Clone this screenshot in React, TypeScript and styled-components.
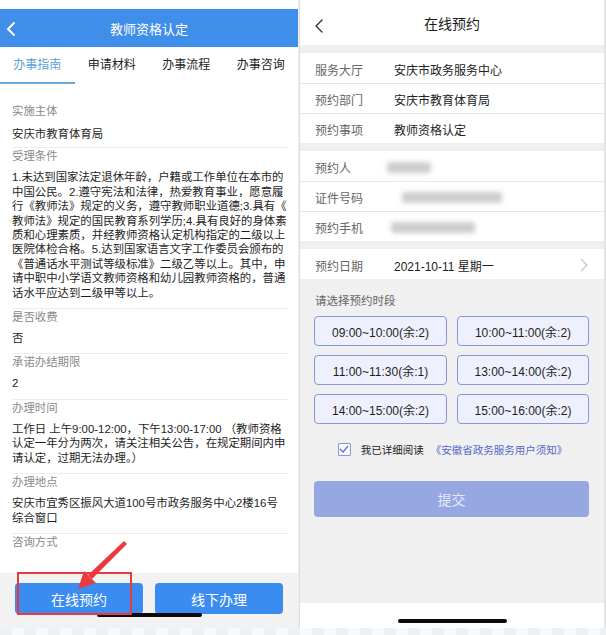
import React from "react";
import styled, { createGlobalStyle } from "styled-components";

const Global = createGlobalStyle`
  html, body { margin: 0; padding: 0; background: #ffffff; }
  body { font-family: "Liberation Sans", "Noto Sans CJK SC", sans-serif; -webkit-font-smoothing: antialiased; }
  * { box-sizing: border-box; }
`;

const Page = styled.div`
  width: 606px;
  height: 635px;
  display: flex;
  flex-direction: column;
  overflow: hidden;
`;

const Panels = styled.div`
  display: flex;
  height: 628px;
`;

const BottomStrip = styled.div`
  height: 7px;
  background: repeating-linear-gradient(90deg, #eef1f4 0 12px, #f8f9fb 12px 24px);
`;

/* ---------- left screen ---------- */
const LeftPanel = styled.div`
  position: relative;
  width: 298px;
  display: flex;
  flex-direction: column;
  background: #ffffff;
`;

const StatusGap = styled.div`
  height: 9px;
  background: #ffffff;
`;

const BlueHeader = styled.div`
  height: 38px;
  background: #3f8ee9;
  display: flex;
  align-items: center;
  justify-content: center;
  position: relative;
  color: #ffffff;
  font-size: 13px;
`;

const HeaderBack = styled.span`
  position: absolute;
  left: 6px;
  top: 13px;
  display: flex;
`;

const Tabs = styled.div`
  height: 37px;
  display: grid;
  grid-template-columns: repeat(4, 1fr);
`;

const Tab = styled.div<{ $active?: boolean }>`
  display: flex;
  align-items: center;
  justify-content: center;
  font-size: 12px;
  padding-bottom: 2px;
  color: ${(p) => (p.$active ? "#5b9fd6" : "#222222")};
  border-bottom: 2px solid ${(p) => (p.$active ? "#6aaad8" : "transparent")};
`;

const Guide = styled.div`
  flex: 1;
  overflow: hidden;
  padding: 19px 11px 0 12px;
`;

const Section = styled.div<{ $first?: boolean }>`
  border-top: ${(p) => (p.$first ? "none" : "1px solid #ececec")};
  padding-bottom: ${(p) => (p.$first ? 6 : 8)}px;
`;

const Label = styled.div`
  font-size: 11.4px;
  line-height: 16px;
  color: #8a8a8a;
`;

const Value = styled.div<{ $gap: number }>`
  margin-top: ${(p) => p.$gap}px;
  font-size: 11.4px;
  line-height: 14.4px;
  color: #1e1e1e;
`;

const Line = styled.span`
  display: block;
  white-space: nowrap;
`;

const ActionBar = styled.div`
  height: 55px;
  background: #f2f2f2;
  padding: 10px 15px 0 15px;
  display: flex;
  gap: 12px;
  align-items: flex-start;
`;

const ActionButton = styled.div`
  flex: 1;
  height: 31px;
  border-radius: 4px;
  background: #3a8cf1;
  color: #ffffff;
  font-size: 14px;
  display: flex;
  align-items: center;
  justify-content: center;
`;

const HomeBar = styled.div<{ $left: number; $top: number }>`
  position: absolute;
  left: ${(p) => p.$left}px;
  top: ${(p) => p.$top}px;
  width: 105px;
  height: 4px;
  border-radius: 2px;
  background: #0a0a0a;
`;

const Highlight = styled.div`
  position: absolute;
  left: 17px;
  top: 572px;
  width: 115px;
  height: 43px;
  border: 2px solid #ea3a3f;
`;

const ArrowSvg = styled.svg`
  position: absolute;
  left: 0;
  top: 0;
  pointer-events: none;
`;

const Separator = styled.div`
  width: 2px;
  background: linear-gradient(90deg, #f4f4f4, #d9d9d9);
`;

const EdgeLine = styled.div`
  width: 2px;
  background: #e4e4e4;
`;

/* ---------- right screen ---------- */
const RightPanel = styled.div`
  width: 304px;
  display: flex;
  flex-direction: column;
  background: #ffffff;
`;

const PlainHeader = styled.div`
  height: 45px;
  display: flex;
  align-items: center;
  justify-content: center;
  position: relative;
  font-size: 14px;
  color: #1a1a1a;
  padding-top: 1px;
`;

const PlainBack = styled.span`
  position: absolute;
  left: 14px;
  top: 19px;
  display: flex;
`;

const Band = styled.div`
  height: 8px;
  background: #efefef;
`;

const Group = styled.div`
  display: flex;
  flex-direction: column;
`;

const Row = styled.div`
  height: 30px;
  display: grid;
  grid-template-columns: 79px 1fr auto;
  align-items: center;
  padding: 2px 16px 0 15px;
  font-size: 12px;
  & + & {
    border-top: 1px solid #e6e6e6;
  }
`;

const RowLabel = styled.span`
  color: #666666;
`;

const RowValue = styled.span`
  color: #222222;
  display: flex;
  align-items: center;
`;

const Blur = styled.span<{ $w: number; $ml?: number }>`
  display: inline-block;
  width: ${(p) => p.$w}px;
  height: 11px;
  margin-left: ${(p) => p.$ml ?? 0}px;
  border-radius: 3px;
  background: #c4c4c4;
  filter: blur(2.5px);
  opacity: 0.85;
`;

const SlotSection = styled.div`
  flex: 1;
  background: #f0f0f0;
  padding: 14px 15px 0 14px;
  display: flex;
  flex-direction: column;
`;

const SlotTitle = styled.div`
  font-size: 11.5px;
  line-height: 16px;
  color: #666666;
  padding-left: 1px;
`;

const SlotGrid = styled.div`
  margin-top: 7px;
  display: grid;
  grid-template-columns: 133px 132px;
  column-gap: 10px;
  row-gap: 9px;
`;

const Slot = styled.div`
  height: 30px;
  border: 1px solid #8797dd;
  border-radius: 4px;
  background: #eef1fd;
  display: flex;
  align-items: center;
  justify-content: center;
  font-size: 12px;
  color: #1e1e1e;
`;

const AgreeRow = styled.div`
  margin-top: 17px;
  height: 16px;
  display: flex;
  align-items: center;
  justify-content: center;
  font-size: 10.5px;
  color: #222222;
  padding-left: 2px;
`;

const CheckBox = styled.span`
  width: 13px;
  height: 13px;
  border: 1px solid #8797dd;
  border-radius: 1px;
  display: flex;
  align-items: center;
  justify-content: center;
  margin-right: 10px;
  background: #f7f8fe;
`;

const Link = styled.span`
  color: #5468c9;
  margin-left: 7px;
`;

const Submit = styled.div`
  margin-top: 24px;
  height: 36px;
  border-radius: 4px;
  background: #97a7e2;
  color: #e4e9f9;
  font-size: 14px;
  display: flex;
  align-items: center;
  justify-content: center;
`;

const HomeArea = styled.div`
  height: 25px;
  background: #ffffff;
  display: flex;
  justify-content: center;
  padding-top: 16px;
`;

const Bar = styled.div`
  width: 109px;
  height: 4px;
  border-radius: 2px;
  background: #0a0a0a;
`;

const conditions = [
  "1.未达到国家法定退休年龄，户籍或工作单位在本市的",
  "中国公民。2.遵守宪法和法律，热爱教育事业，愿意履",
  "行《教师法》规定的义务，遵守教师职业道德;3.具有《",
  "教师法》规定的国民教育系列学历;4.具有良好的身体素",
  "质和心理素质，并经教师资格认定机构指定的二级以上",
  "医院体检合格。5.达到国家语言文字工作委员会颁布的",
  "《普通话水平测试等级标准》二级乙等以上。其中，申",
  "请中职中小学语文教师资格和幼儿园教师资格的，普通",
  "话水平应达到二级甲等以上。",
];

const sections: { label: string; lines: string[] }[] = [
  { label: "实施主体", lines: ["安庆市教育体育局"] },
  { label: "受理条件", lines: conditions },
  { label: "是否收费", lines: ["否"] },
  { label: "承诺办结期限", lines: ["2"] },
  {
    label: "办理时间",
    lines: [
      "工作日 上午9:00-12:00，下午13:00-17:00 （教师资格",
      "认定一年分为两次，请关注相关公告，在规定期间内申",
      "请认定，过期无法办理。）",
    ],
  },
  {
    label: "办理地点",
    lines: ["安庆市宜秀区振风大道100号市政务服务中心2楼16号", "综合窗口"],
  },
  { label: "咨询方式", lines: [] },
];

const slots = [
  "09:00~10:00(余:2)",
  "10:00~11:00(余:2)",
  "11:00~11:30(余:1)",
  "13:00~14:00(余:2)",
  "14:00~15:00(余:2)",
  "15:00~16:00(余:2)",
];

const Chevron = ({ color, w }: { color: string; w: number }) => (
  <svg width="10" height="14" viewBox="0 0 10 14">
    <polyline points="8,1 2,7 8,13" fill="none" stroke={color} strokeWidth={w} strokeLinecap="round" strokeLinejoin="round" />
  </svg>
);

export default function App() {
  return (
    <Page>
      <Global />
      <Panels>
        <LeftPanel>
          <StatusGap />
          <BlueHeader>
            <HeaderBack>
              <Chevron color="#ffffff" w={2} />
            </HeaderBack>
            教师资格认定
          </BlueHeader>
          <Tabs>
            <Tab $active>办事指南</Tab>
            <Tab>申请材料</Tab>
            <Tab>办事流程</Tab>
            <Tab>办事咨询</Tab>
          </Tabs>
          <Guide>
            {sections.map((s, i) => (
              <Section key={s.label} $first={i === 0}>
                <Label>{s.label}</Label>
                {s.lines.length > 0 && (
                  <Value $gap={i === 0 ? 8 : 6}>
                    {s.lines.map((l) => (
                      <Line key={l}>{l}</Line>
                    ))}
                  </Value>
                )}
              </Section>
            ))}
          </Guide>
          <ActionBar>
            <ActionButton>在线预约</ActionButton>
            <ActionButton>线下办理</ActionButton>
          </ActionBar>
          <HomeBar $left={97} $top={613} />
          <Highlight />
          <ArrowSvg width="298" height="628" viewBox="0 0 298 628">
            <polygon points="124,541 127,544 92,579 88,575" fill="#ea3a3f" />
            <polygon points="78,589 84,571 96,583" fill="#ea3a3f" />
          </ArrowSvg>
        </LeftPanel>
        <Separator />
        <RightPanel>
          <PlainHeader>
            <PlainBack>
              <Chevron color="#333333" w={1.4} />
            </PlainBack>
            在线预约
          </PlainHeader>
          <Band />
          <Group>
            <Row>
              <RowLabel>服务大厅</RowLabel>
              <RowValue>安庆市政务服务中心</RowValue>
            </Row>
            <Row>
              <RowLabel>预约部门</RowLabel>
              <RowValue>安庆市教育体育局</RowValue>
            </Row>
            <Row>
              <RowLabel>预约事项</RowLabel>
              <RowValue>教师资格认定</RowValue>
            </Row>
          </Group>
          <Band />
          <Group>
            <Row>
              <RowLabel>预约人</RowLabel>
              <RowValue>
                <Blur $w={44} $ml={-7} />
              </RowValue>
            </Row>
            <Row>
              <RowLabel>证件号码</RowLabel>
              <RowValue>
                <Blur $w={100} $ml={8} />
              </RowValue>
            </Row>
            <Row>
              <RowLabel>预约手机</RowLabel>
              <RowValue>
                <Blur $w={84} $ml={-3} />
              </RowValue>
            </Row>
          </Group>
          <Band />
          <Group>
            <Row>
              <RowLabel>预约日期</RowLabel>
              <RowValue>2021-10-11 星期一</RowValue>
              <svg width="8" height="14" viewBox="0 0 8 14">
                <polyline points="1,1 7,7 1,13" fill="none" stroke="#c6c6c6" strokeWidth="1.3" />
              </svg>
            </Row>
          </Group>
          <SlotSection>
            <SlotTitle>请选择预约时段</SlotTitle>
            <SlotGrid>
              {slots.map((s) => (
                <Slot key={s}>{s}</Slot>
              ))}
            </SlotGrid>
            <AgreeRow>
              <CheckBox>
                <svg width="10" height="8" viewBox="0 0 10 8">
                  <polyline points="1,4 4,7 9,1" fill="none" stroke="#5b6fd0" strokeWidth="1.2" />
                </svg>
              </CheckBox>
              我已详细阅读
              <Link>《安徽省政务服务用户须知》</Link>
            </AgreeRow>
            <Submit>提交</Submit>
          </SlotSection>
          <HomeArea>
            <Bar />
          </HomeArea>
        </RightPanel>
        <EdgeLine />
      </Panels>
      <BottomStrip />
    </Page>
  );
}
